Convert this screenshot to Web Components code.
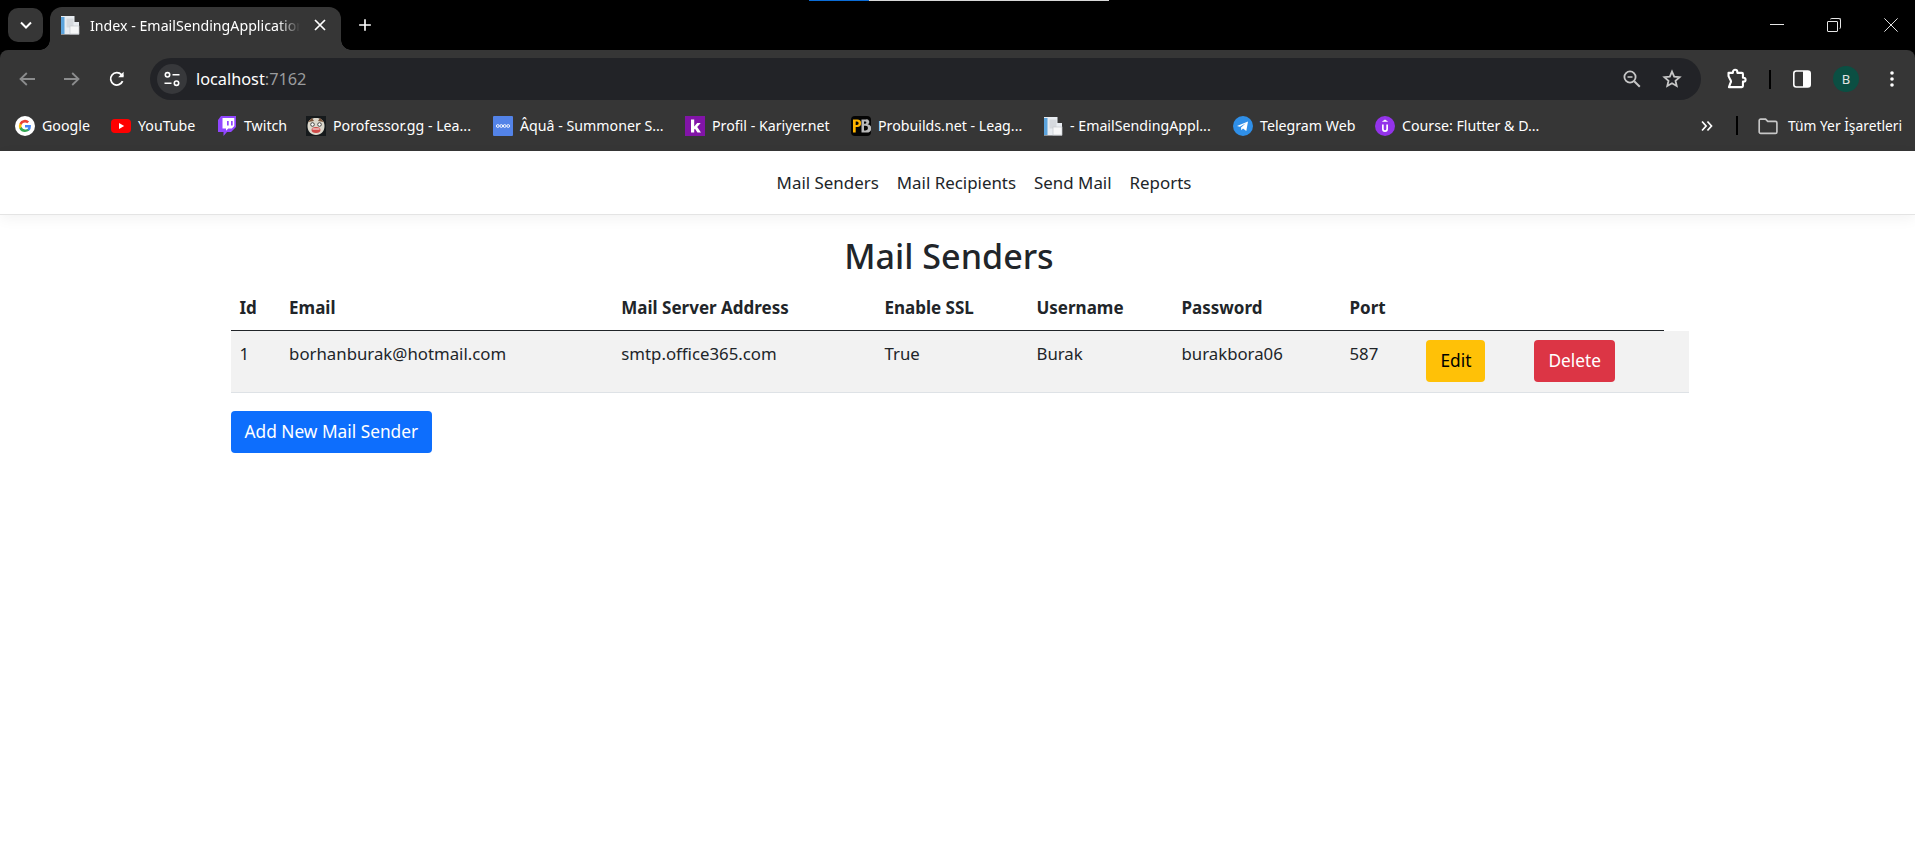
<!DOCTYPE html>
<html lang="en">
<head>
<meta charset="utf-8">
<title>Index - EmailSendingApplication</title>
<style>
  html, body { margin: 0; height: 100%; background: #fff; overflow: hidden; }
  body { font-family: "Noto Sans", sans-serif; color: #212529; }
</style>
</head>
<body>
<browser-chrome></browser-chrome>
<site-nav>
  <a slot="links">Mail Senders</a>
  <a slot="links">Mail Recipients</a>
  <a slot="links">Send Mail</a>
  <a slot="links">Reports</a>
</site-nav>
<mail-senders>
  <mail-row id-value="1" email="borhanburak@hotmail.com" server="smtp.office365.com" ssl="True" username="Burak" password="burakbora06" port="587">
    <ui-button slot="edit" variant="warning">Edit</ui-button>
    <ui-button slot="delete" variant="danger">Delete</ui-button>
  </mail-row>
  <ui-button slot="add" variant="primary">Add New Mail Sender</ui-button>
</mail-senders>

<script>
// icons for the browser frame, all on a 20x20 box
const ICONS = {
  chevron: `<path d="M5 7.500l5 5 5-5" fill="none" stroke="#fff" stroke-width="2"/>`,
  close: `<path d="M5 5l10 10M15 5L5 15" fill="none" stroke="#fff" stroke-width="1.7"/>`,
  winclose: `<path d="M.5 .5l19 19M19.500 .5l-19 19" fill="none" stroke="#e6e6e6" stroke-width="1.400"/>`,
  plus: `<path d="M10 3.500v13M3.500 10h13" fill="none" stroke="#fff" stroke-width="1.800"/>`,
  back: `<path d="M18 10H4M9.800 4L3.500 10l6.300 6" fill="none" stroke="#8b8c8d" stroke-width="1.800"/>`,
  forward: `<path d="M2 10h14M10.200 4l6.300 6-6.300 6" fill="none" stroke="#8b8c8d" stroke-width="1.800"/>`,
  reload: `<path d="M15.600 12.200A6.200 6.200 0 1 1 14.400 5.600L16 7.200" fill="none" stroke="#fff" stroke-width="1.800"/><path d="M16.600 2.800v5.400h-5.400z" fill="#fff"/>`,
  tune: `<circle cx="5.500" cy="5.800" r="2.200" fill="none" stroke="#fff" stroke-width="1.600"/><path d="M10.500 5.800H17.500M2.500 14.200h7" stroke="#fff" stroke-width="1.600"/><circle cx="14.500" cy="14.200" r="2.200" fill="none" stroke="#fff" stroke-width="1.600"/>`,
  zoomout: `<circle cx="8" cy="8" r="5.600" fill="none" stroke="#c7c7c7" stroke-width="1.800"/><path d="M12.200 12.200l5.600 5.600" stroke="#c7c7c7" stroke-width="2"/><path d="M5.500 8h5" stroke="#c7c7c7" stroke-width="1.500"/>`,
  star: `<path d="M10 2.600l2.200 5 5.400.5-4.100 3.600 1.200 5.300L10 14.200 5.300 17l1.200-5.300-4.100-3.600 5.400-.5z" fill="none" stroke="#c7c7c7" stroke-width="1.800"/>`,
  extension: `<path d="M3.200 4.400h4V3.600a2 2 0 0 1 4 0v.8h4.100a1 1 0 0 1 1 1v3.400h.6a1.800 1.800 0 0 1 0 3.600h-.6v4a1 1 0 0 1-1 1H3.600l1.200-3.400a2.800 2.800 0 0 0 0-3.400L3.200 7.400z" fill="none" stroke="#fff" stroke-width="1.900" stroke-linejoin="round"/>`,
  panel: `<rect x="1.800" y="2" width="16.400" height="16" rx="2.500" fill="none" stroke="#fff" stroke-width="1.600"/><path d="M11 2h4.700a2.500 2.500 0 0 1 2.500 2.500v11a2.500 2.500 0 0 1-2.500 2.500H11z" fill="#fff"/>`,
  dots: `<circle cx="10" cy="4" r="1.800" fill="#fff"/><circle cx="10" cy="10" r="1.800" fill="#fff"/><circle cx="10" cy="16" r="1.800" fill="#fff"/>`,
  more: `<path d="M4.500 5l4.500 5-4.500 5M10.500 5l4.500 5-4.500 5" fill="none" stroke="#fff" stroke-width="1.900"/>`,
  folder: `<path d="M2 5a1.300 1.300 0 0 1 1.300-1.300h4.500l2 2.100h7a1.300 1.300 0 0 1 1.300 1.300v8.300a1.300 1.300 0 0 1-1.300 1.300H3.300A1.300 1.300 0 0 1 2 15.400z" fill="none" stroke="#c7c7c7" stroke-width="1.500"/>`,
  google: `<circle cx="10" cy="10" r="10" fill="#fff"/><path d="M15.900 10.200c0-.5 0-.9-.1-1.300H10v2.500h3.300a2.900 2.900 0 0 1-1.200 1.800v1.600h2a6 6 0 0 0 1.800-4.600z" fill="#4285f4"/><path d="M10 16c1.600 0 3-.5 4.100-1.400l-2-1.600c-.6.400-1.300.6-2.100.6a3.700 3.700 0 0 1-3.400-2.500h-2.100v1.600A6 6 0 0 0 10 16z" fill="#34a853"/><path d="M6.600 11.100a3.600 3.600 0 0 1 0-2.300V7.200H4.500a6 6 0 0 0 0 5.500z" fill="#fbbc05"/><path d="M10 6.400c.9 0 1.700.3 2.300.9l1.800-1.800A6 6 0 0 0 4.500 7.200l2.100 1.600A3.700 3.700 0 0 1 10 6.400z" fill="#ea4335"/>`,
  youtube: `<rect x="0" y="3" width="20" height="14" rx="4" fill="#f00"/><path d="M8 7l5.200 3L8 13z" fill="#fff"/>`,
  twitch: `<path d="M4 0h15v11l-5 5h-4l-3.500 4v-4H1V4z" fill="#9146ff"/><path d="M5.500 2v10.500H9v2.300l2.300-2.300h3.500l2.500-2.500V2z" fill="#fff"/><path d="M10 5h1.700v4.500H10zM14 5h1.700v4.500H14z" fill="#9146ff"/>`,
  poro: `<rect width="20" height="20" fill="#161a1c"/><path d="M1.500 10c0-5.500 3.500-8 8.500-8s8.500 2.500 8.500 8c0 5.500-3.500 9-8.500 9s-8.500-3.500-8.500-9z" fill="#dcd8cc"/><path d="M2 6l4-4 2 3zM18 6l-4-4-2 3z" fill="#7a5238"/><circle cx="6.500" cy="8.500" r="1.800" fill="#fff" stroke="#222" stroke-width=".8"/><circle cx="13.500" cy="8.500" r="1.800" fill="#fff" stroke="#222" stroke-width=".8"/><ellipse cx="10" cy="14" rx="4.500" ry="3" fill="#cf4a48"/><path d="M6.500 12.500h7v1h-7z" fill="#fff"/>`,
  opgg: `<rect width="20" height="20" rx="1" fill="#5383e8"/><circle cx="4.800" cy="10" r="1.400" fill="none" stroke="#fff" stroke-width=".9"/><circle cx="8.300" cy="10" r="1.400" fill="none" stroke="#fff" stroke-width=".9"/><circle cx="11.700" cy="10" r="1.400" fill="none" stroke="#fff" stroke-width=".9"/><circle cx="15.200" cy="10" r="1.400" fill="none" stroke="#fff" stroke-width=".9"/>`,
  kariyer: `<rect width="20" height="20" fill="#8214a8"/><path d="M6 3.500h3.200v7l3-3.500h3.500l-3.500 3.900 3.800 5.600h-3.600l-2.400-3.800-.8.900v2.900H6z" fill="#fff"/>`,
  probuilds: `<rect width="20" height="20" rx="4" fill="#050505"/><path d="M2 3.500h4.300a3 3 0 0 1 0 7.500H4.700v5.500H2zm2.700 2v3.500h1.200a1.700 1.700 0 0 0 0-3.500z" fill="#ffb400" fill-rule="evenodd"/><path d="M10.500 3.500h4.300a2.500 2.500 0 0 1 1.800 4.700 2.800 2.800 0 0 1-1 8.300h-5.100zm2.500 2v2.200h1.300a1.100 1.100 0 0 0 0-2.200zm0 4.200v4.800h1.600a2.400 2.400 0 0 0 0-4.800z" fill="#b9b9b9" fill-rule="evenodd"/>`,
  doc: `<path d="M1 1h13.500v6h4.500v12.500H1z" fill="#e8ecf1"/><rect x="1" y="2" width="3.500" height="17" fill="#5ba3dc"/><rect x="6.500" y="3.500" width="7" height="9" fill="#d5d9de"/><rect x="10" y="11" width="9" height="8" fill="#f6f7f8" stroke="#c5c9ce" stroke-width=".7"/>`,
  telegram: `<circle cx="10" cy="10" r="10" fill="#2f8fe8"/><path d="M4 10l11-4.500-1.700 9.500-3.300-2.400-1.700 1.700-.3-2.900 4.800-4.200-6 3.600z" fill="#fff"/>`,
  udemy: `<circle cx="10" cy="10" r="10" fill="#9333ea"/><path d="M7 8.500v4.500a3 3 0 0 0 6 0V8.500h-1.700V13a1.300 1.300 0 0 1-2.600 0V8.500z" fill="#fff"/><path d="M10 3.500l3.200 2.300h-6.400z" fill="#fff"/>`
};

class ChromeIcon extends HTMLElement {
  constructor() {
    super();
    this.attachShadow({ mode: 'open' });
    const size = this.getAttribute('size') || 20;
    this.shadowRoot.innerHTML = `
      <style>
        :host { display: inline-flex; flex: none; }
        svg { display: block; }
      </style>
      <svg width="${size}" height="${size}" viewBox="0 0 20 20">${ICONS[this.getAttribute('name')] || ''}</svg>`;
  }
}
customElements.define('chrome-icon', ChromeIcon);

class BookmarkItem extends HTMLElement {
  constructor() {
    super();
    this.attachShadow({ mode: 'open' });
    this.shadowRoot.innerHTML = `
      <style>
        :host { display: flex; align-items: center; gap: 7px; flex: none; white-space: nowrap; }
      </style>
      <chrome-icon name="${this.getAttribute('icon')}"></chrome-icon>
      <span><slot></slot></span>`;
    this.style.width = this.getAttribute('w') + 'px';
  }
}
customElements.define('bookmark-item', BookmarkItem);

const BrowserChromeTemplate = document.createElement('template');
BrowserChromeTemplate.innerHTML = `
  <style>
    :host {
      display: block;
      position: relative;
      background: #000;
      color: #fff;
      font-family: "Noto Sans", sans-serif;
    }
    .progress {
      position: absolute; top: 0; left: 809px; width: 300px; height: 1px;
      background: linear-gradient(90deg, #0a6cd6 60px, #d8d8d8 60px);
    }
    .strip { height: 50px; display: flex; box-sizing: border-box; padding: 8px 0 0 8px; }
    .tab-search {
      width: 35px; height: 34px; border-radius: 10px; background: #363636;
      display: flex; align-items: center; justify-content: center;
    }
    .tab {
      position: relative; box-sizing: border-box; width: 291px; height: 43px; margin: -1px 0 0 7px;
      background: #363636; border-radius: 12px 12px 0 0;
      display: flex; align-items: center; padding: 0 11px 7px 10px; gap: 10px;
    }
    .tab::before, .tab::after {
      content: ''; position: absolute; bottom: 0; width: 10px; height: 10px;
      background: radial-gradient(circle at var(--cx) 0, #000 9.500px, #363636 10px);
    }
    .tab::before { left: -10px; --cx: 0; }
    .tab::after { right: -10px; --cx: 100%; }
    .title {
      width: 210px; overflow: hidden; white-space: nowrap; font-size: 14.200px;
      -webkit-mask-image: linear-gradient(90deg, #000 188px, transparent 210px);
    }
    .new-tab { margin: 4px 0 0 15px; height: 26px; display: flex; align-items: center; }
    .win { margin-left: auto; display: flex; align-items: flex-start; gap: 43px; padding: 10px 17px 0 0; }
    .win i { display: block; width: 14px; height: 14px; box-sizing: border-box; position: relative; }
    .min::before { content: ''; position: absolute; left: 0; right: 0; top: 6px; height: 1px; background: #e6e6e6; }
    .restore::before { content: ''; position: absolute; inset: 3px 3px 0 0; border: 1px solid #e6e6e6; border-radius: 1px; }
    .restore::after { content: ''; position: absolute; inset: 0 0 3px 3px; border: 1px solid #e6e6e6; border-left: 0; border-bottom: 0; border-radius: 2px; }

    .toolbar {
      height: 50px; box-sizing: border-box; background: #363636; border-radius: 8px 8px 0 0;
      display: flex; align-items: center; padding: 8px 12px 0 17px;
    }
    .nav-icons { display: flex; gap: 25px; margin-right: 23px; }
    .omnibox {
      width: 1551px; height: 42px; flex: none; box-sizing: border-box; background: #222327; border-radius: 21px;
      display: flex; align-items: center; padding: 0 19px 0 7px; font-size: 16.300px;
    }
    .chip {
      width: 30px; height: 30px; border-radius: 50%; background: #37383b;
      display: flex; align-items: center; justify-content: center; margin-right: 9px;
    }
    .url span { color: #9a9b9d; }
    .omni-end { margin-left: auto; display: flex; gap: 20px; }
    .tools { display: flex; align-items: center; margin-left: 24px; }
    .sep { width: 2px; height: 19px; background: #000; margin: 0 21px 0 22px; }
    .avatar {
      width: 26px; height: 26px; border-radius: 50%; background: #0b4f43; margin: 0 23px 0 21px;
      font-size: 13px; display: flex; align-items: center; justify-content: center; color: #e4e4e4;
    }
    .bookmarks {
      height: 51px; box-sizing: border-box; background: #363636; padding: 0 12px 0 15px;
      display: flex; align-items: center; font-size: 14.200px;
    }
    .bm-list { display: flex; align-items: center; width: 1701px; flex: none; }
    .bm-end { display: flex; align-items: center; }
    .bm-sep { width: 2px; height: 19px; background: #000; margin: 0 19px 0 20px; }
    .all { margin-left: 9px; white-space: nowrap; font-size: 13.800px; }
  </style>
  <div class="progress"></div>
  <div class="strip">
    <div class="tab-search"><chrome-icon name="chevron" size="20"></chrome-icon></div>
    <div class="tab">
      <chrome-icon name="doc"></chrome-icon>
      <div class="title">Index - EmailSendingApplication</div>
      <chrome-icon name="close"></chrome-icon>
    </div>
    <div class="new-tab"><chrome-icon name="plus" size="18"></chrome-icon></div>
    <div class="win"><i class="min"></i><i class="restore"></i><chrome-icon name="winclose" size="14"></chrome-icon></div>
  </div>
  <div class="toolbar">
    <div class="nav-icons">
      <chrome-icon name="back"></chrome-icon>
      <chrome-icon name="forward"></chrome-icon>
      <chrome-icon name="reload"></chrome-icon>
    </div>
    <div class="omnibox">
      <div class="chip"><chrome-icon name="tune"></chrome-icon></div>
      <div class="url">localhost<span>:7162</span></div>
      <div class="omni-end"><chrome-icon name="zoomout"></chrome-icon><chrome-icon name="star"></chrome-icon></div>
    </div>
    <div class="tools">
      <chrome-icon name="extension" size="22"></chrome-icon>
      <div class="sep"></div>
      <chrome-icon name="panel"></chrome-icon>
      <div class="avatar">B</div>
      <chrome-icon name="dots"></chrome-icon>
    </div>
  </div>
  <div class="bookmarks">
    <div class="bm-list">
      <bookmark-item icon="google" w="96">Google</bookmark-item>
      <bookmark-item icon="youtube" w="106">YouTube</bookmark-item>
      <bookmark-item icon="twitch" w="89">Twitch</bookmark-item>
      <bookmark-item icon="poro" w="187">Porofessor.gg - Lea...</bookmark-item>
      <bookmark-item icon="opgg" w="192">Âquâ - Summoner S...</bookmark-item>
      <bookmark-item icon="kariyer" w="166">Profil - Kariyer.net</bookmark-item>
      <bookmark-item icon="probuilds" w="192">Probuilds.net - Leag...</bookmark-item>
      <bookmark-item icon="doc" w="190">- EmailSendingAppl...</bookmark-item>
      <bookmark-item icon="telegram" w="142">Telegram Web</bookmark-item>
      <bookmark-item icon="udemy" w="323">Course: Flutter &amp; D...</bookmark-item>
      <chrome-icon name="more" size="18"></chrome-icon>
    </div>
    <div class="bm-end">
      <div class="bm-sep"></div>
      <chrome-icon name="folder" size="22"></chrome-icon>
      <span class="all">Tüm Yer İşaretleri</span>
    </div>
  </div>
`;

class BrowserChrome extends HTMLElement {
  constructor() {
    super();
    this.attachShadow({ mode: 'open' });
    this.shadowRoot.appendChild(BrowserChromeTemplate.content.cloneNode(true));
  }
}
customElements.define('browser-chrome', BrowserChrome);

const SiteNavTemplate = document.createElement('template');
SiteNavTemplate.innerHTML = `
  <style>
    :host {
      display: block;
      position: relative;
      box-sizing: border-box;
      height: 64px;
      background: #fff;
      border-bottom: 1px solid #e4e4e4;
      box-shadow: 0 4px 13px rgba(0, 0, 0, .05);
    }
    nav {
      height: 100%;
      display: flex;
      align-items: center;
      justify-content: center;
      gap: 18px;
      padding-left: 53px;
      font-size: 16.900px;
    }
    ::slotted(a) { color: #212529; cursor: pointer; }
  </style>
  <nav><slot name="links"></slot></nav>
`;

class SiteNav extends HTMLElement {
  constructor() {
    super();
    this.attachShadow({ mode: 'open' });
    this.shadowRoot.appendChild(SiteNavTemplate.content.cloneNode(true));
  }
}
customElements.define('site-nav', SiteNav);

const UiButtonTemplate = document.createElement('template');
UiButtonTemplate.innerHTML = `
  <style>
    :host { display: inline-block; }
    button {
      display: block;
      box-sizing: border-box;
      height: 42px;
      border: 0;
      border-radius: 4px;
      padding: 0 14px;
      font: inherit;
      font-size: 17.300px;
      cursor: pointer;
    }
    :host([variant="primary"]) button { background: #0d6efd; color: #fff; }
    :host([variant="warning"]) button { background: #ffc107; color: #000; }
    :host([variant="danger"]) button { background: #dc3545; color: #fff; }
  </style>
  <button><slot></slot></button>
`;

class UiButton extends HTMLElement {
  constructor() {
    super();
    this.attachShadow({ mode: 'open' });
    this.shadowRoot.appendChild(UiButtonTemplate.content.cloneNode(true));
  }
}
customElements.define('ui-button', UiButton);

const COLS = '49.6px 332.2px 263.2px 152px 145px 168px 76px 108px 139px 25px';

class MailRow extends HTMLElement {
  constructor() {
    super();
    this.attachShadow({ mode: 'open' });
    const val = n => this.getAttribute(n);
    const cells = [val('id-value'), val('email'), val('server'), val('ssl'), val('username'), val('password'), val('port')]
      .map(v => `<div class="cell">${v}</div>`).join('');
    this.shadowRoot.innerHTML = `
      <style>
        :host {
          display: grid;
          grid-template-columns: ${COLS};
          background: #f2f2f2;
          border-bottom: 1px solid #dee2e6;
          font-size: 16.800px;
        }
        .cell { padding: 10px 9px 9px; line-height: 26px; }
        .action { padding: 9px 9px 10px 10px; }
        .wide { grid-column: span 2; }
      </style>
      ${cells}
      <div class="cell action"><slot name="edit"></slot></div>
      <div class="cell action wide"><slot name="delete"></slot></div>`;
  }
}
customElements.define('mail-row', MailRow);

const MailSendersTemplate = document.createElement('template');
MailSendersTemplate.innerHTML = `
  <style>
    :host { display: block; width: 1458px; margin: 0 auto; position: relative; left: 2px; padding-top: 20px; }
    h2 {
      margin: 0 25px 8.500px 0;
      padding-left: 4px;
      font-size: 34.100px;
      font-weight: 500;
      line-height: 42px;
      text-align: center;
      color: #212529;
    }
    .head {
      display: grid;
      grid-template-columns: ${COLS};
      margin-right: 25px;
      border-bottom: 1.500px solid #212529;
      font-size: 17px;
      font-weight: 700;
    }
    .head div { padding: 9px; line-height: 26px; white-space: nowrap; }
    .head .last { grid-column: span 2; }
    .add { margin-top: 18px; }
  </style>
  <h2>Mail Senders</h2>
  <div class="head">
    <div>Id</div><div>Email</div><div>Mail Server Address</div><div>Enable SSL</div>
    <div>Username</div><div>Password</div><div>Port</div><div class="last"></div>
  </div>
  <slot></slot>
  <div class="add"><slot name="add"></slot></div>
`;

class MailSenders extends HTMLElement {
  constructor() {
    super();
    this.attachShadow({ mode: 'open' });
    this.shadowRoot.appendChild(MailSendersTemplate.content.cloneNode(true));
  }
}
customElements.define('mail-senders', MailSenders);
</script>
</body>
</html>
